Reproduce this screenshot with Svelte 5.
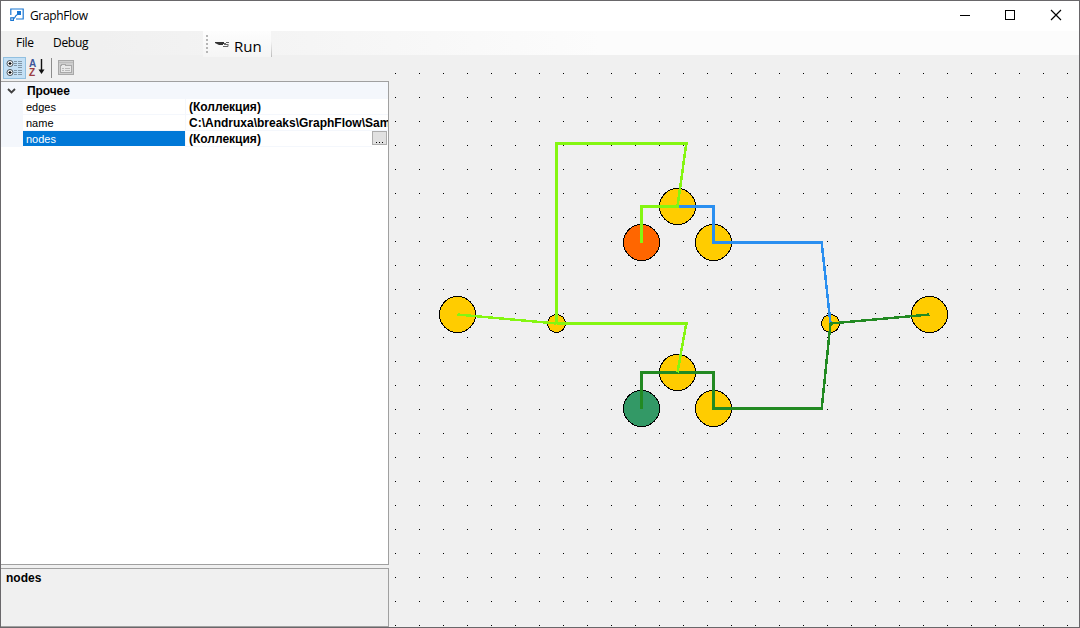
<script>
  const rows = [
    { name: 'edges', value: '(Коллекция)' },
    { name: 'name', value: 'C:\\Andruxa\\breaks\\GraphFlow\\Sam' },
    { name: 'nodes', value: '(Коллекция)', selected: true },
  ];
  const amber = '#ffcc00';
  const nodes = [
    { x: 457.5, y: 314.5, r: 18, fill: amber },
    { x: 556.5, y: 323.5, r: 9, fill: amber },
    { x: 677.5, y: 206.5, r: 18, fill: amber },
    { x: 641.5, y: 242.5, r: 18, fill: '#ff6600' },
    { x: 713.5, y: 242.5, r: 18, fill: amber },
    { x: 677.5, y: 372.5, r: 18, fill: amber },
    { x: 641.5, y: 408.5, r: 18, fill: '#339966' },
    { x: 713.5, y: 408.5, r: 18, fill: amber },
    { x: 830.5, y: 323.5, r: 9, fill: amber },
    { x: 929.5, y: 314.5, r: 18, fill: amber },
  ];
  const lime = '#84f611';
  const blue = '#2a8ff0';
  const green = '#228a22';
  const edges = [
    { c: green, p: '641.5,408.5 641.5,372.5 713.5,372.5 713.5,408.5 821.5,408.5' },
    { c: blue, p: '677.5,206.5 713.5,206.5 713.5,242.5 821.5,242.5' },
    { c: lime, p: '641.5,242.5 641.5,206.5 679,206.5' },
    { c: lime, p: '556.5,323.5 556.5,143.5 687.5,143.5' },
    { c: lime, p: '556.5,323.5 687.5,323.5' },
    { c: lime, p: '457.5,314.5 556.5,323.5' },
    { c: lime, p: '686.5,142 677.5,206.5' },
    { c: lime, p: '686.5,322 677.5,372.5' },
    { c: blue, p: '821.5,241 830.5,323.5' },
    { c: green, p: '821.5,410 830.5,323.5' },
    { c: green, p: '830.5,323.5 929.5,314.5' },
  ];
</script>

<div class="window">
  <header class="title">
    <svg class="logo" width="14" height="14" viewBox="0 0 14 14" fill="none" stroke="#1976d2" stroke-width="1.2">
      <path d="M.8 7V1h12.4v10H6" />
      <path d="M7 3h4v4H7z" fill="#1976d2" stroke="none" />
      <rect x=".8" y="9.8" width="2.6" height="2.6" />
      <path d="M3.6 10.4c1.6 0 1-2.400 3.600-3.600" />
    </svg>
    <span class="caption">GraphFlow</span>
    <div class="controls">
      <svg width="46" height="29" shape-rendering="crispEdges"><path d="M18 14.5h10" stroke="#000" /></svg>
      <svg width="45" height="29" shape-rendering="crispEdges"><rect x="17.5" y="9.5" width="9" height="9" fill="none" stroke="#000" /></svg>
      <svg width="46" height="29"><path d="M18 9l10 10M28 9L18 19" stroke="#000" stroke-width="1.15" /></svg>
    </div>
  </header>

  <nav class="menu">
    <span class="file">File</span>
    <span class="debug">Debug</span>
    <div class="run">
      <svg width="4" height="20" fill="#b5b5b5"><path d="M1 1h2v2H1zM1 5h2v2H1zM1 9h2v2H1zM1 13h2v2H1zM1 17h2v2H1z" /></svg>
      <svg class="tool" width="14" height="7" viewBox="0 0 14 7">
        <path d="M0 1h9v2H8v1H4L2 3 0 2z" fill="#333" />
        <path d="M9 2.5h2M11 1.500h3M9 3.500h4M8 5.500h5V3" fill="none" stroke="#666" stroke-width="1" />
      </svg>
      <span>Run</span>
    </div>
  </nav>

  <main>
    <aside>
      <div class="tools">
        <div class="cat">
          <svg width="18" height="18" fill="none">
            <g stroke="#4b545c"><circle cx="4" cy="4.5" r="3" fill="#fff" /><circle cx="4" cy="13.5" r="3" fill="#fff" /></g>
            <path d="M2.500 4.500h3M4 3v3M2.500 13.500h3M4 12v3" stroke="#000" stroke-width="1.2" />
            <path d="M8 2.5h3M8 4.5h3M8 6.5h3M8 11.5h3M8 13.5h3M8 15.5h3M12 2.5h4M12 4.5h4M12 6.5h4M12 8.5h4M12 11.5h4M12 13.5h4M12 15.5h4" stroke="#8095a5" />
          </svg>
        </div>
        <div class="sort">
          <div class="az"><b>A</b><b>Z</b></div>
          <svg width="7" height="16"><path d="M3.5 0v12" stroke="#111" stroke-width="1.4" /><path d="M.5 10.5h6L3.5 15z" fill="#111" /></svg>
        </div>
        <i class="sep"></i>
        <svg class="pages" width="16" height="15" fill="none" stroke="#a8a8a8" shape-rendering="crispEdges">
          <rect x=".5" y=".5" width="15" height="14" fill="#cecece" /><path d="M1 2.5h14" stroke="#bdbdbd" />
          <path d="M2.5 5.5h1v-1h4v1h6v7h-11z" fill="#e8e8e8" /><path d="M4 8.5h2M7 8.5h5M4 10.5h2M7 10.5h5" stroke="#b8b8b8" />
        </svg>
      </div>

      <section class="grid">
        <div class="group">
          <svg width="9" height="6"><path d="M1 1l3.5 3.5L8 1" fill="none" stroke="#404040" stroke-width="1.8" /></svg>
          <b>Прочее</b>
        </div>
        {#each rows as row}
          <div class="row">
            <span class="key" class:selected={row.selected}>{row.name}</span>
            <span class="value">{row.value}</span>
            {#if row.selected}
              <button aria-label="…"><svg width="7" height="1" shape-rendering="crispEdges"><path d="M0 0h1v1H0zM3 0h1v1H3zM6 0h1v1H6z" /></svg></button>
            {/if}
          </div>
        {/each}
      </section>

      <section class="help"><b>nodes</b></section>
    </aside>

    <svg class="canvas" width="690" height="572" viewBox="389 55 690 572">
      <defs>
        <pattern id="dots" x="395" y="73" width="24" height="24" patternUnits="userSpaceOnUse">
          <rect width="1" height="1" fill="#000" />
        </pattern>
      </defs>
      <rect x="389" y="55" width="690" height="572" fill="url(#dots)" />
      <g shape-rendering="crispEdges">
        {#each nodes as n}
          <circle cx={n.x} cy={n.y} r={n.r} fill={n.fill} stroke="#000" />
        {/each}
        {#each edges as e}
          <polyline points={e.p} fill="none" stroke={e.c} stroke-width={e.p.split(' ').length === 2 && !e.p.startsWith('556') ? 2.5 : 3} />
        {/each}
      </g>
    </svg>
  </main>
</div>

<style>
  :global(body) { margin: 0; }
  .window {
    box-sizing: border-box; width: 1080px; height: 628px; border: 1px solid #69676a;
    background: #f0f0f0; color: #000; display: flex; flex-direction: column; overflow: hidden;
    font-family: "Liberation Sans", sans-serif; font-size: 11px;
  }
  svg { display: block; flex: none; }
  .title { height: 30px; background: #fff; display: flex; align-items: flex-start; font: 12px/29px "Open Sans", sans-serif; }
  .logo { margin: 7px 6px 0 9px; }
  .caption { letter-spacing: -0.35px; }
  .controls { display: flex; margin-left: auto; }
  .menu {
    height: 24px; display: flex; font: 12px/24px "Open Sans", sans-serif; letter-spacing: -0.3px;
    background: linear-gradient(90deg, #f0f0f0 0, #f0f0f0 100px, #fcfcfc 600px, #fcfcfc);
  }
  .file { box-sizing: border-box; width: 52px; padding-left: 15px; }
  .debug { width: 150px; }
  .run {
    display: flex; align-items: center; box-sizing: border-box; width: 69px; height: 26px;
    background: linear-gradient(#fdfdfd, #f5f5f5); border-right: 1px solid; border-image: linear-gradient(#f4f4f4 40%, #b8b8b8) 1; padding-left: 2px;
    font-size: 15px; letter-spacing: 0;
  }
  .run span { padding-top: 3px; }
  .tool { margin: 1px 5px 0 6px; }
  main { display: flex; height: 572px; }
  aside { width: 388px; display: flex; flex-direction: column; }
  .tools { height: 26px; display: flex; align-items: flex-start; }
  .cat { box-sizing: border-box; width: 23px; height: 22px; margin: 2px 0 0 2px; background: #c4e0f5; border: 1px solid #92c0e0; padding: 1px 2px; }
  .sort { display: flex; margin: 4px 0 0 3px; }
  .az { display: flex; flex-direction: column; font: 10px/9px "Liberation Sans", sans-serif; width: 8px; margin-right: 1px; color: #3f569b; }
  .az b + b { color: #9c3d43; }
  .sep { width: 1px; height: 20px; background: #8c8c8c; margin: 3px 6px 0 6px; }
  .pages { margin-top: 5px; }
  .grid { box-sizing: border-box; height: 484px; border: 1px solid #a0a0a0; border-left-width: 0; background: #fff; overflow: hidden; }
  .group { height: 17px; background: #f4f7fc; display: flex; align-items: center; }
  .group svg { margin: 1px 11px 0 6px; }
  .group b { font-size: 12px; padding-top: 1px; letter-spacing: -0.1px; }
  .row { display: flex; height: 16px; line-height: 16px; border-left: 22px solid #f4f7fc; box-sizing: border-box; overflow: hidden; }
  .key { box-sizing: border-box; width: 162px; padding-left: 3px; border-bottom: 1px solid #f4f7fc; flex: none; }
  .key.selected { background: #0078d7; color: #fff; border: 0; height: 15px; }
  .value { flex: 1; min-width: 0; box-sizing: border-box; font-size: 12px; font-weight: bold; padding-left: 3px; border-bottom: 1px solid #f4f7fc; border-left: 1px solid #f4f7fc; white-space: nowrap; overflow: hidden; }
  button { box-sizing: border-box; width: 15px; height: 14px; padding: 9px 0 0 3px; margin: 0 1px 0 0; border: 1px solid #adadad; background: #e1e1e1; display: block; }
  .help { box-sizing: border-box; height: 59px; margin-top: 3px; border: 1px solid #a0a0a0; border-left-width: 0; padding: 3px 5px; font-size: 12px; line-height: 12px; }
</style>
